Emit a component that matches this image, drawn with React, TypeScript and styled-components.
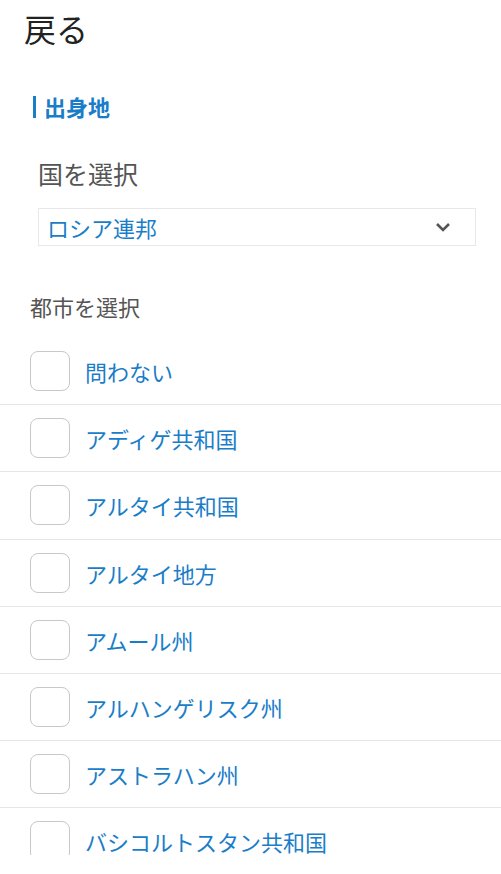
import styled, { createGlobalStyle } from 'styled-components';

const GlobalStyle = createGlobalStyle`
  html, body {
    margin: 0;
    padding: 0;
    background: #fff;
  }
  body {
    font-family: "Noto Sans CJK JP", "Noto Sans", sans-serif;
  }
`;

const cities = [
  '問わない',
  'アディゲ共和国',
  'アルタイ共和国',
  'アルタイ地方',
  'アムール州',
  'アルハンゲリスク州',
  'アストラハン州',
  'バシコルトスタン共和国',
];

const Page = styled.div`
  height: 855px;
  display: flex;
  flex-direction: column;
  overflow: hidden;
  background: #fff;
`;

const Header = styled.div`
  height: 56px;
  line-height: 56px;
  padding-left: 24px;
  font-size: 32px;
  color: #222;
`;

const SectionTitle = styled.h2`
  margin: 37px 0 0 33px;
  display: flex;
  align-items: center;
  height: 26px;
  font-size: 22px;
  font-weight: 700;
  line-height: 26px;
  color: #1a7dc8;

  &::before {
    content: '';
    width: 3px;
    height: 22px;
    margin: 2px 8px 0 0;
    background: #1a7dc8;
  }
`;

const FieldLabel = styled.div<{ $size: number; $left: number }>`
  font-size: ${(p) => p.$size}px;
  line-height: ${(p) => p.$size + 6}px;
  padding-left: ${(p) => p.$left}px;
  color: #555;
`;

const CountryLabel = styled(FieldLabel)`
  margin-top: 39px;
`;

const CityLabel = styled(FieldLabel)`
  margin-top: 46px;
`;

const Select = styled.div`
  margin: 19px 0 0 38px;
  width: 438px;
  height: 38px;
  box-sizing: border-box;
  border: 1px solid #e8e8e8;
  display: flex;
  align-items: center;
  justify-content: space-between;
  padding: 0 24px 0 8px;
  font-size: 22px;
  color: #1a7dc8;
`;

const List = styled.ul`
  list-style: none;
  margin: 18px 0 0;
  padding: 0;
  flex: 1;
  overflow: hidden;
`;

const Row = styled.li`
  height: 66.2px;
  border-bottom: 1px solid #e6e6e6;
  display: flex;
  align-items: center;
  padding-left: 30px;
`;

const Box = styled.span`
  width: 40px;
  height: 40px;
  box-sizing: border-box;
  border: 1px solid #c8c8c8;
  border-radius: 8px;
  flex-shrink: 0;
`;

const RowLabel = styled.span`
  margin-left: 15px;
  font-size: 22px;
  color: #1a7dc8;
`;

const Chevron = () => (
  <svg width="16" height="12" viewBox="0 0 16 12">
    <polyline points="2,3 8,9 14,3" fill="none" stroke="#555" strokeWidth="2.6" />
  </svg>
);

export default function App() {
  return (
    <Page>
      <GlobalStyle />
      <Header>戻る</Header>
      <SectionTitle>出身地</SectionTitle>
      <CountryLabel $size={25} $left={38}>国を選択</CountryLabel>
      <Select>
        <span>ロシア連邦</span>
        <Chevron />
      </Select>
      <CityLabel $size={22} $left={30}>都市を選択</CityLabel>
      <List>
        {cities.map((c) => (
          <Row key={c}>
            <Box />
            <RowLabel>{c}</RowLabel>
          </Row>
        ))}
      </List>
    </Page>
  );
}
